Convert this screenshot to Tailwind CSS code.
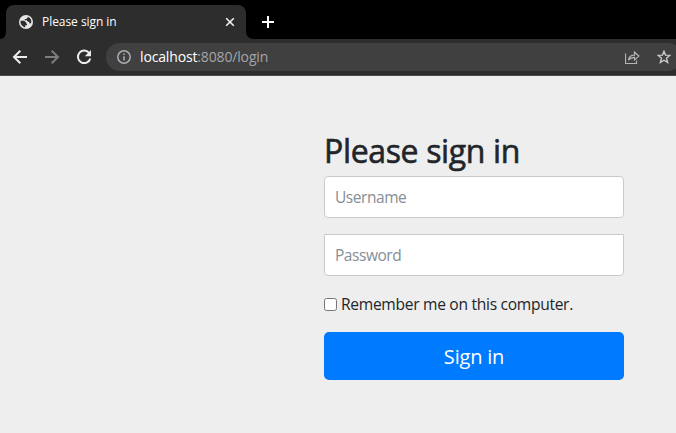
<!DOCTYPE html>
<html lang="en">
<head>
<meta charset="utf-8">
<title>Please sign in</title>
<script src="https://cdn.jsdelivr.net/npm/@tailwindcss/browser@4"></script>
</head>
<body class="h-[433px] w-[676px] overflow-hidden bg-[#eeeeee] font-['Open_Sans','Noto_Sans',sans-serif] text-[#212529]">
<header>
  <div class="flex h-[39px] items-end bg-black">
    <svg class="h-2 w-[6px] shrink-0" viewBox="0 0 6 8"><path d="M6 0v8H0c4 0 6-3 6-8z" fill="#2d2d2d"/></svg>
    <div class="flex h-[34px] w-[240px] shrink-0 items-center rounded-t-lg bg-[#2d2d2d] pr-[10px] pl-[13px]">
      <svg class="size-[14px] shrink-0" viewBox="0 0 14 14"><circle cx="7" cy="7" r="7" fill="#e4e6e8"/><path d="M1.6 5.8h3.6l1.9 1.6v1.2H8v1.6H6.2v2.2A5.5 5.5 0 0 1 1.6 5.8zM8.6 1.8v1L7.4 4H5.8v1.3h1.8L9 6.8h1.2v1.5h1.9A5.5 5.5 0 0 0 8.6 1.8z" fill="#2d2d2d"/></svg>
      <span class="ml-[9px] text-[12px] leading-4 tracking-[-0.05px] text-white">Please sign in</span>
      <svg class="ml-auto size-3" viewBox="0 0 12 12" fill="none" stroke="#f1f1f1" stroke-width="1.6"><path d="m2.2 2.2 7.6 7.6m0-7.6L2.2 9.8"/></svg>
    </div>
    <svg class="h-2 w-2 shrink-0" viewBox="0 0 8 8"><path d="M0 0v8h8C3 8 0 5 0 0z" fill="#2d2d2d"/></svg>
    <svg class="mb-[11px] ml-2 size-3" viewBox="0 0 12 12" fill="none" stroke="#fff" stroke-width="2"><path d="M6 0v12M0 6h12"/></svg>
  </div>
  <div class="flex h-[37px] items-center border-b border-[#4a494b] bg-[#2d2d2d] pl-3">
    <svg class="size-4 shrink-0" viewBox="0 0 16 16" fill="none" stroke="#ececec" stroke-width="2"><path d="M15 8H2.5M8.3 1.7 2 8l6.3 6.3"/></svg>
    <svg class="ml-4 size-4 shrink-0" viewBox="0 0 16 16" fill="none" stroke="#7d7d7d" stroke-width="2"><path d="M1 8h12.5M7.7 1.7 14 8l-6.3 6.3"/></svg>
    <svg class="ml-4 size-4 shrink-0" viewBox="0 0 16 16"><path d="M13.4 4.2A6.3 6.3 0 1 0 14.3 9.4" fill="none" stroke="#ececec" stroke-width="2"/><path d="M15 1v6.2H8.8z" fill="#ececec"/></svg>
    <div class="ml-[14px] flex h-7 w-[576px] shrink-0 items-center rounded-full bg-[#404040] pl-[11px]">
      <svg class="size-[14px] shrink-0" viewBox="0 0 14 14" fill="none" stroke="#a9adb1" stroke-width="1.5"><circle cx="7" cy="7" r="6.2"/><path d="M7 6.2v4.2M7 3.5V5"/></svg>
      <span class="ml-[9px] text-[14px] leading-5 tracking-[-0.15px] text-[#a3a5a8]"><span class="text-white">localhost</span>:8080/login</span>
      <svg class="ml-auto h-[14px] w-[15px]" viewBox="0 0 15 14" fill="none" stroke="#b4b4b4"><path d="M.5 3.5v10h11v-3" stroke-width="1.2"/><path d="M3.5 10.2c.4-3.6 2.6-5 6-5V2.2l4.4 3.9-4.4 3.8V7.3c-2.6 0-4.6.9-6 2.9z" stroke-width="1.2"/></svg>
      <svg class="mr-[11px] ml-[17px] size-[14px]" viewBox="0 0 14 14" fill="none" stroke="#c8c8c8" stroke-width="1.4"><path d="m7 1.2 1.5 3.9 4.3.3-3.3 2.8 1.1 4.2L7 10.2l-3.6 2.2 1.1-4.2-3.3-2.8 4.3-.3z"/></svg>
    </div>
  </div>
</header>
<main class="ml-[324px] flex w-[300px] flex-col pt-[56px]">
  <h1 class="mb-[6px] text-[32px] leading-[38px] font-medium tracking-[-0.35px] whitespace-nowrap [-webkit-text-stroke:0.6px_#212529]">Please sign in</h1>
  <input type="text" placeholder="Username" aria-label="Username" class="h-[42px] w-full rounded-[4px] border border-[#c9cacc] bg-white px-[10px] text-[15.5px] tracking-[-0.45px] placeholder:text-[#868e96]">
  <input type="password" placeholder="Password" aria-label="Password" class="mt-4 h-[42px] w-full rounded-b-[4px] border border-[#c9cacc] bg-white px-[10px] text-[15.5px] tracking-[-0.45px] placeholder:text-[#868e96]">
  <label class="mt-4 flex h-6 items-center text-[15.6px] leading-6 tracking-[-0.3px] whitespace-nowrap"><input type="checkbox" class="mr-[4px] size-[13px]">Remember me on this computer.</label>
  <button class="mt-4 h-12 w-full rounded-[5px] bg-[#007bff] pt-[2px] text-[20px] leading-[30px] tracking-[-0.2px] text-white">Sign in</button>
</main>
</body>
</html>
